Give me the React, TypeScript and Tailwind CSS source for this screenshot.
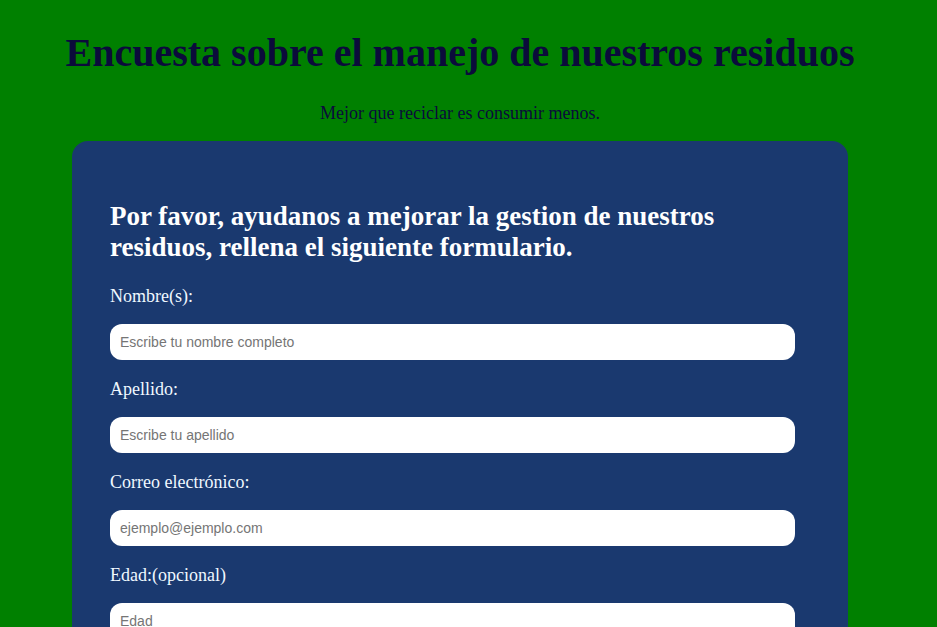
export default function App() {
  const fields = [
    { label: "Nombre(s):", placeholder: "Escribe tu nombre completo" },
    { label: "Apellido:", placeholder: "Escribe tu apellido" },
    { label: "Correo electrónico:", placeholder: "ejemplo@ejemplo.com" },
    { label: "Edad:(opcional)", placeholder: "Edad" },
  ];
  return (
    <div
      className="min-h-[627px] bg-[#008000] w-full pb-10"
      style={{ fontFamily: '"Liberation Serif", serif' }}
    >
      <div className="w-[920px]">
        <h1 className="text-center text-[40px] font-bold text-[#0b0b3b] pt-[30px] leading-[46px]">
          Encuesta sobre el manejo de nuestros residuos
        </h1>
        <p className="text-center text-[18px] text-[#0b0b3b] mt-[26px] leading-[22px]">
          Mejor que reciclar es consumir menos.
        </p>
        <div className="mx-auto mt-[17px] w-[776px] rounded-[16px] bg-[#1a396f] pl-[38px] pt-[60px] pb-10">
          <h2 className="text-[27px] font-bold text-white leading-[31px] w-[650px]">
            Por favor, ayudanos a mejorar la gestion de nuestros residuos, rellena el siguiente formulario.
          </h2>
          <div className="mt-[23px] flex flex-col">
            {fields.map((f) => (
              <div key={f.label} className="flex flex-col">
                <label className="text-[18px] text-[#f0f8ff] leading-[20px]">{f.label}</label>
                <input
                  placeholder={f.placeholder}
                  className="mt-[18px] mb-[19px] h-[36px] w-[685px] rounded-[12px] bg-white px-[10px] text-[14px] text-gray-800 placeholder:text-[#757575] outline-none"
                  style={{ fontFamily: '"Liberation Sans", Arial, sans-serif' }}
                />
              </div>
            ))}
          </div>
        </div>
      </div>
    </div>
  );
}
